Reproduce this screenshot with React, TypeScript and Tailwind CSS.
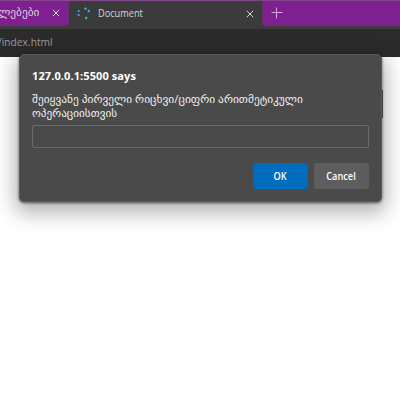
import React from "react";

function Close() {
  return (
    <svg width="8" height="8" viewBox="0 0 8 8" fill="none" stroke="#dcd5dd" strokeWidth="1">
      <path d="M.8.8 7.2 7.2M7.2.8.8 7.2" />
    </svg>
  );
}

function Spinner() {
  return (
    <svg width="14" height="14" viewBox="0 0 14 14" fill="#46aee8">
      <circle cx="9.4" cy="1.6" r="1.2" />
      <circle cx="12.7" cy="4" r="1.2" />
      <circle cx="2.7" cy="4" r="1.1" />
      <circle cx="2.7" cy="8" r="1.1" />
      <circle cx="10.2" cy="11" r="1.2" />
    </svg>
  );
}

export default function App() {
  return (
    <div className="relative h-[400px] w-[400px] overflow-hidden bg-white font-['Open_Sans','DejaVu_Sans',sans-serif]">
      <header className="flex h-[29px] items-start border-t border-[#84468b] bg-[#3b3b3b]">
        <div className="flex h-[25px] w-[69px] items-center justify-between rounded-br-[3px] border-r border-b border-[#66316d] bg-[#7f2090] pr-[8px]">
          <div className="flex h-5 w-[39px] items-center justify-end overflow-hidden">
            <span className="origin-right scale-x-[1.08] whitespace-nowrap text-[10.5px] text-[#ded0e0]">ალებები</span>
          </div>
          <Close />
        </div>
        <div className="flex h-[25px] w-[193px] items-center pr-[8px] pl-[7px]">
          <Spinner />
          <span className="ml-[8px] origin-left scale-x-[.92] text-[10px] text-[#d6d6d6]">Document</span>
          <div className="ml-auto"><Close /></div>
        </div>
        <div className="flex h-[25px] flex-1 items-center rounded-bl-[3px] border-b border-l border-[#66316d] bg-[#7f2090] pl-[8px]">
          <svg width="12" height="12" viewBox="0 0 12 12" fill="none" stroke="#d9a9df"><path d="M.5 5.5h11M5.5.5v11" /></svg>
        </div>
      </header>
      <div className="flex h-[28px] items-start bg-[#2b2b2b]">
        <span className="-ml-[2px] mt-[5px] origin-left scale-x-[.93] text-[11px] leading-[15px] text-[#9c9c9c]">/index.html</span>
      </div>
      <main className="flex h-[343px] justify-end pt-[33px] pr-[17px]">
        <div className="h-[28px] w-2 bg-[#666]" />
      </main>
      <section className="absolute top-[54px] left-[19px] flex h-[148px] w-[363px] flex-col rounded-[5px] border border-[#5c5c5c] bg-[#4a4a4a] px-[12px] pt-[13px] text-white shadow-[0_7px_20px_4px_rgba(0,0,0,.3),0_1px_3px_rgba(0,0,0,.6)]">
        <h1 className="origin-left text-[11px] leading-[15px] font-bold tracking-[.1px]">127.0.0.1:5500 says</h1>
        <p className="mt-[9px] text-[11px] leading-[14px] whitespace-nowrap text-[#f0f0f0]">
          <span className="block w-max origin-left scale-x-[1.035]">შეიყვანე პირველი რიცხვი/ციფრი არითმეტიკული</span>
          <span className="block w-max origin-left scale-x-[1.02]">ოპერაციისთვის</span>
        </p>
        <div className="mt-[5px] h-[23px] w-[337px] rounded-[2px] border border-[#6b6b6b]" />
        <div className="mt-[15px] flex justify-end gap-[6px]">
          <button className="h-[26px] w-[55px] rounded-[2px] bg-[#006cbe] text-[10px] font-semibold"><span className="inline-block scale-x-[.92]">OK</span></button>
          <button className="h-[26px] w-[55px] rounded-[2px] bg-[#5d5d5d] text-[10px] font-semibold"><span className="inline-block scale-x-[.92]">Cancel</span></button>
        </div>
      </section>
    </div>
  );
}
